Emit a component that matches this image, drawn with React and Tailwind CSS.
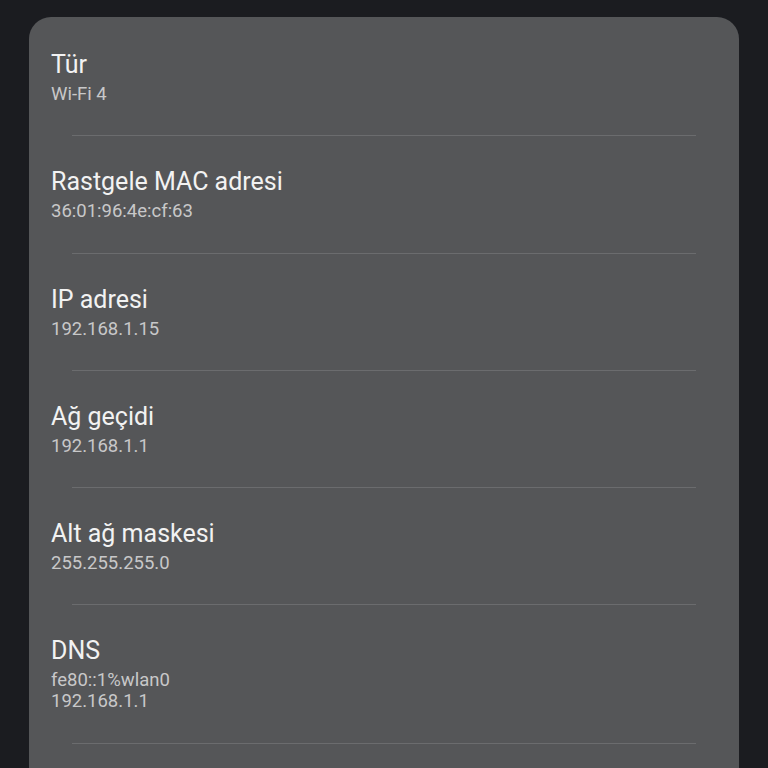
import React from 'react'

const rows = [
  { title: 'Tür', values: ['Wi-Fi 4'] },
  { title: 'Rastgele MAC adresi', values: ['36:01:96:4e:cf:63'] },
  { title: 'IP adresi', values: ['192.168.1.15'] },
  { title: 'Ağ geçidi', values: ['192.168.1.1'] },
  { title: 'Alt ağ maskesi', values: ['255.255.255.0'] },
  { title: 'DNS', values: ['fe80::1%wlan0', '192.168.1.1'] },
]

function Divider() {
  return <div className="mx-[43px] h-px bg-[#6b6c6e]" />
}

function Row({ title, values, first }) {
  return (
    <div>
      {!first && <Divider />}
      <div className={`px-[22px] pb-[30.3px] ${first ? 'pt-[33px]' : 'pt-[31px]'}`}>
        <div className="text-[25px] leading-[30px] text-[#f2f2f2]">{title}</div>
        <div className="mt-[4px]">
          {values.map((v) => (
            <div key={v} className="text-[18.5px] leading-[21px] text-[#c8c8c9]">{v}</div>
          ))}
        </div>
      </div>
    </div>
  )
}

export default function App() {
  return (
    <div
      className="h-[768px] w-[768px] overflow-hidden bg-[#1b1c20]"
      style={{ fontFamily: 'Roboto, "Noto Sans", sans-serif' }}
    >
      {/* header scrolled off the top */}
      <div className="h-[17px] overflow-hidden px-[51px]">
        <div className="-mt-[25px] text-[20px] leading-[28px] text-[#9a9b9d]">Ağ ayrıntıları</div>
      </div>

      <div className="mx-[29px] min-h-[800px] rounded-[22px] bg-[#555658]">
        {rows.map((r, i) => (
          <Row key={r.title} {...r} first={i === 0} />
        ))}
        <Divider />
      </div>
    </div>
  )
}
